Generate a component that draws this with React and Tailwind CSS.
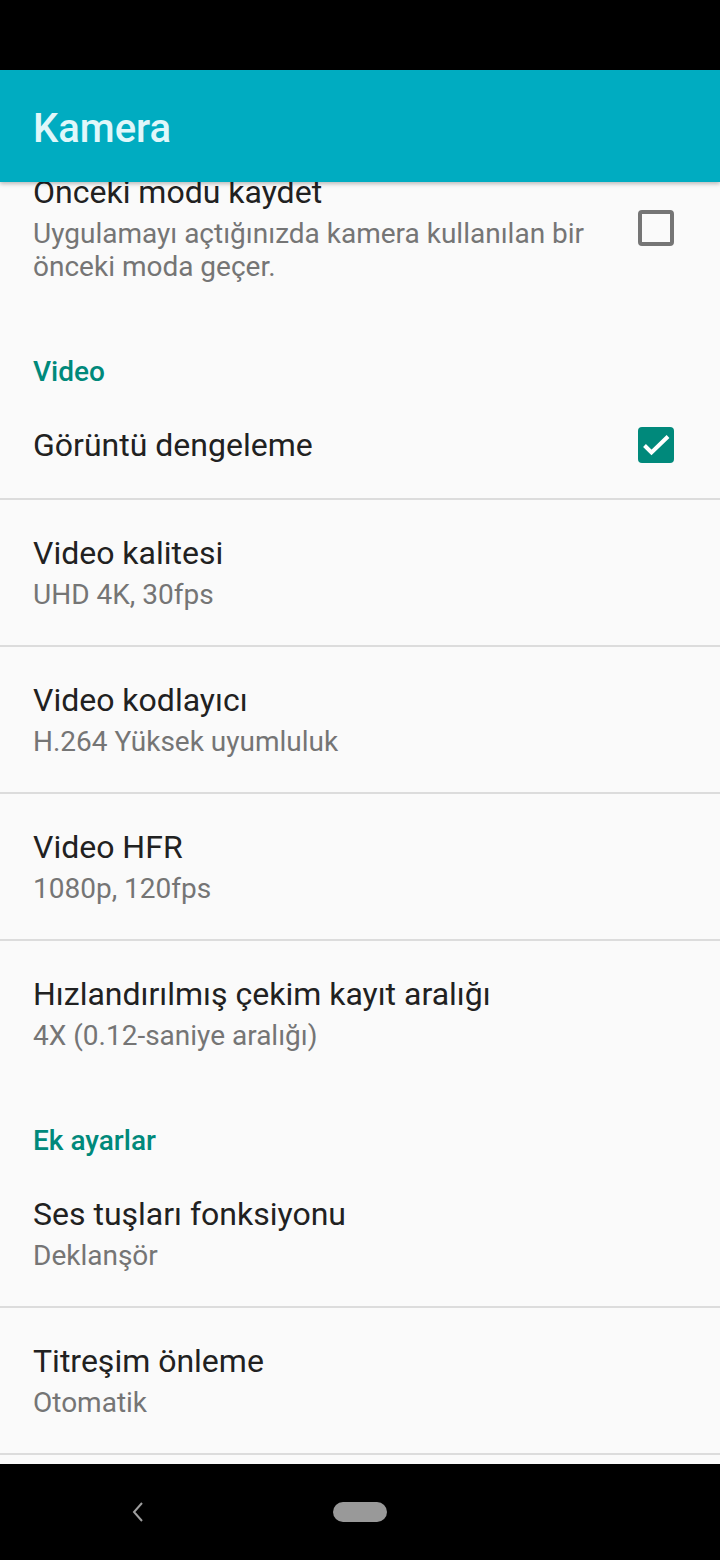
const font = { fontFamily: "Roboto, 'Noto Sans', sans-serif" };

function Checkbox({ checked }) {
  if (checked) {
    return (
      <div className="h-[36px] w-[36px] rounded-[4px] bg-[#00897b]">
        <svg width="36" height="36" viewBox="0 0 36 36" fill="none">
          <path d="M6.5 18.5l7 7L30 9.5" stroke="#fff" strokeWidth="4" />
        </svg>
      </div>
    );
  }
  return <div className="h-[36px] w-[36px] rounded-[4px] border-[4px] border-[#757575]" />;
}

function Pref({ title, summary, checkbox, divider = true }) {
  return (
    <div className={divider ? "border-b-2 border-[#dcdcdc]" : ""}>
      <div className="flex items-center py-[34px] pl-[33px] pr-[46px]">
        <div className="flex-1">
          <div className="text-[32px] leading-[38px] text-[#212121]">{title}</div>
          {summary && (
            <div className="mt-[6px] pr-[40px] text-[28px] leading-[33px] text-[#757575]">{summary}</div>
          )}
        </div>
        {checkbox !== undefined && <Checkbox checked={checkbox} />}
      </div>
    </div>
  );
}

function Category({ label }) {
  return (
    <div className="pb-[4px] pl-[33px] pt-[38px] text-[28px] font-medium leading-[33px] text-[#00897b]">
      {label}
    </div>
  );
}

export default function App() {
  return (
    <div className="flex h-[1560px] w-[720px] flex-col overflow-hidden bg-[#fafafa]" style={font}>
      <div className="h-[70px] shrink-0 bg-black" />
      <div className="relative z-10 flex h-[112px] shrink-0 items-center bg-[#00acc1] pl-[33px] pt-[5px] shadow-[0_2px_4px_rgba(0,0,0,0.25)]">
        <span className="text-[40px] font-medium text-[#e0f7fa]">Kamera</span>
      </div>
      <div className="-mt-[43px] flex-1 overflow-hidden">
        <Pref
          title="Önceki modu kaydet"
          summary="Uygulamayı açtığınızda kamera kullanılan bir önceki moda geçer."
          checkbox={false}
          divider={false}
        />
        <Category label="Video" />
        <Pref title="Görüntü dengeleme" checkbox={true} />
        <Pref title="Video kalitesi" summary="UHD 4K, 30fps" />
        <Pref title="Video kodlayıcı" summary="H.264 Yüksek uyumluluk" />
        <Pref title="Video HFR" summary="1080p, 120fps" />
        <Pref title="Hızlandırılmış çekim kayıt aralığı" summary="4X (0.12-saniye aralığı)" divider={false} />
        <Category label="Ek ayarlar" />
        <Pref title="Ses tuşları fonksiyonu" summary="Deklanşör" />
        <Pref title="Titreşim önleme" summary="Otomatik" />
      </div>
      <div className="flex h-[96px] shrink-0 items-center bg-black">
        <div className="flex w-[276px] justify-center">
          <svg width="14" height="22" viewBox="0 0 14 22">
            <path d="M11 2L3 11l8 9" stroke="#9e9e9e" strokeWidth="2" fill="none" />
          </svg>
        </div>
        <div className="ml-[57px] h-[20px] w-[54px] rounded-full bg-[#999]" />
      </div>
    </div>
  );
}
